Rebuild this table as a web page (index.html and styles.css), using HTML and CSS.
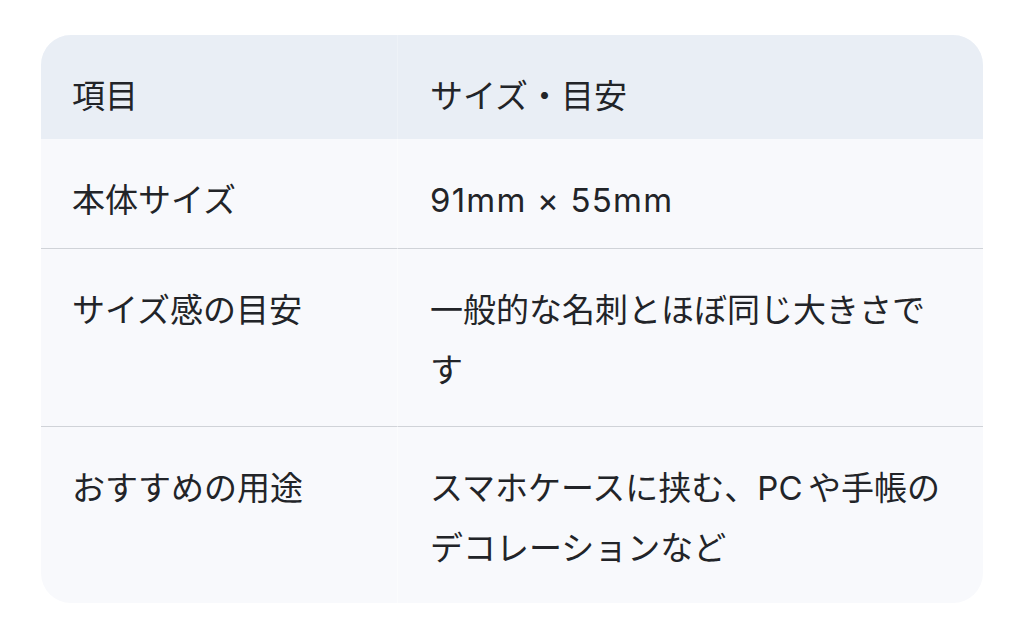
FILE: index.html
```html
<!DOCTYPE html>
<html lang="ja">
<head>
<meta charset="utf-8">
<link rel="stylesheet" href="styles.css">
</head>
<body>
<div class="page">
  <div class="table-wrap">
    <table class="spec">
      <colgroup><col class="c1"><col class="c2"></colgroup>
      <thead>
        <tr><th>項目</th><th class="second">サイズ・目安</th></tr>
      </thead>
      <tbody>
        <tr class="row-1"><td>本体サイズ</td><td class="second"><span class="dims">91mm × 55mm</span></td></tr>
        <tr class="row-2"><td>サイズ感の目安</td><td class="second">一般的な名刺とほぼ同じ大きさです</td></tr>
        <tr class="row-3"><td>おすすめの用途</td><td class="second">スマホケースに挟む、PC&#x2006;や手帳のデコレーションなど</td></tr>
      </tbody>
    </table>
  </div>
</div>
</body>
</html>
```
FILE: styles.css
```css
html, body {
  margin: 0;
  padding: 0;
  background: #ffffff;
}
.page {
  padding: 35px 41px;
  font-family: "Inter", "Noto Sans CJK JP", sans-serif;
  color: #222428;
}
.table-wrap {
  width: 942px;
  border-radius: 30px;
  overflow: hidden;
  background: #f8f9fc;
}
.spec {
  width: 942px;
  border-collapse: separate;
  border-spacing: 0;
  table-layout: fixed;
  font-size: 33px;
  line-height: 60px;
}
.c1 { width: 356px; }
.c2 { width: 586px; }
.spec th {
  background: #e9eef5;
  font-weight: 400;
  text-align: left;
  vertical-align: top;
  padding: 31px 32px 0 31px;
  height: 73px;
}
.spec td {
  padding: 31px 32px 0 31px;
  vertical-align: top;
  border-bottom: 1px solid #d0d3d8;
}
.spec .second {
  border-left: 1px solid #fbfcfd;
  padding-left: 32px;
}
.spec th.second {
  border-left-color: #eef2f7;
}
.dims { letter-spacing: 1.2px; }
.row-1 td { height: 78px; }
.row-2 td { height: 146px; }
.row-3 td { height: 145px; border-bottom: none; }
```
